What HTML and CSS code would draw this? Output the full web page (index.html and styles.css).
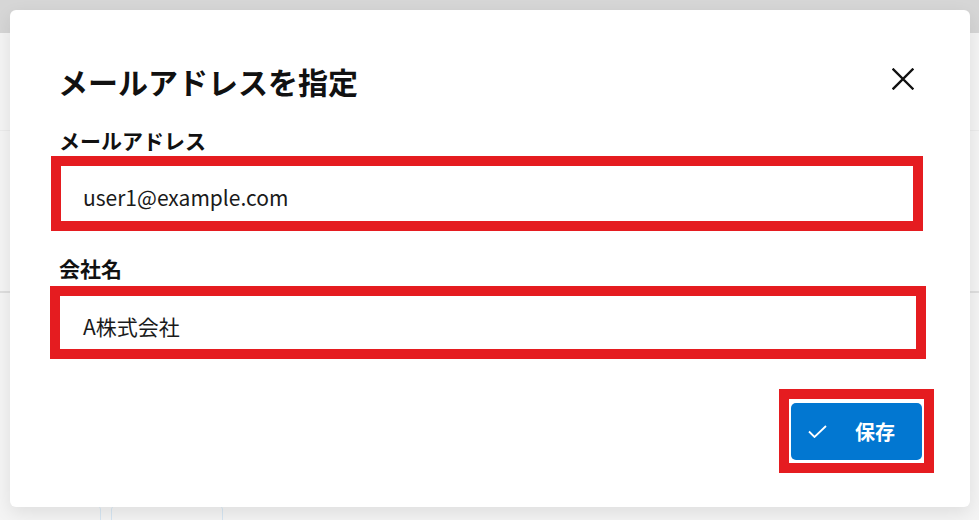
FILE: index.html
```html
<!DOCTYPE html>
<html lang="ja">
<head>
<meta charset="utf-8">
<title>メールアドレスを指定</title>
<link rel="stylesheet" href="styles.css">
</head>
<body>
<div class="page">
  <div class="topbar"></div>
  <div class="bg-content">
    <div class="bg-line bg-line-1"></div>
    <div class="bg-line bg-line-2"></div>
    <div class="bg-cards">
      <div class="bg-card bg-card-a"></div>
      <div class="bg-card bg-card-b"></div>
    </div>
  </div>
</div>

<div class="modal" role="dialog" aria-labelledby="dlg-title">
  <div class="modal-header">
    <h1 id="dlg-title" class="modal-title">メールアドレスを指定</h1>
    <button class="close-btn" aria-label="閉じる">
      <svg width="22" height="22" viewBox="0 0 22 22" aria-hidden="true">
        <path d="M1.5 1.5 L20.5 20.5 M20.5 1.5 L1.5 20.5" stroke="#111" stroke-width="2.4" fill="none" stroke-linecap="square"/>
      </svg>
    </button>
  </div>

  <label class="field-label label-email">メールアドレス</label>
  <div class="field field-email">user1@example.com</div>

  <label class="field-label label-company">会社名</label>
  <div class="field field-company">A株式会社</div>

  <div class="modal-footer">
    <div class="btn-frame">
      <button class="btn-save">
        <svg class="check" width="19" height="13" viewBox="0 0 19 13" aria-hidden="true">
          <path d="M1 6.5 L6.5 12 L18 1" stroke="#fff" stroke-width="1.8" fill="none"/>
        </svg>
        <span class="btn-text">保存</span>
      </button>
    </div>
  </div>
</div>
</body>
</html>
```

FILE: styles.css
```css
* { box-sizing: border-box; }

html, body {
  margin: 0;
  padding: 0;
}

body {
  width: 979px;
  height: 520px;
  overflow: hidden;
  background: #f4f4f4;
  font-family: "Noto Sans CJK JP", "Noto Sans", sans-serif;
  color: #111;
}

.page {
  width: 979px;
  height: 520px;
  overflow: hidden;
}

.topbar {
  height: 33px;
  background: #d6d6d6;
}

.bg-content {
  height: 487px;
  overflow: hidden;
}

.bg-line {
  height: 1px;
  background: #ebebeb;
}

.bg-line-1 {
  margin-top: 97px;
}

.bg-line-2 {
  margin-top: 160px;
  height: 2px;
  background: #dedede;
}

.bg-cards {
  display: flex;
  gap: 10px;
  padding-left: 93px;
  margin-top: 212px;
}

.bg-card {
  height: 15px;
  border: 1px solid #d6e6f3;
  border-bottom: 0;
  border-radius: 5px 5px 0 0;
}

.bg-card-a { width: 8px; border-left: 0; border-top: 0; border-radius: 0 5px 0 0; }
.bg-card-b { width: 112px; }

/* Modal overlays the page */
.modal {
  position: absolute;
  top: 10px;
  left: 10px;
  width: 960px;
  height: 497px;
  background: #fff;
  border-radius: 6px;
  box-shadow: 0 6px 18px rgba(0, 0, 0, 0.09);
  padding-top: 49px;
}

.modal-header {
  display: flex;
  align-items: center;
  justify-content: space-between;
  padding: 0 56px 0 48px;
}

.modal-title {
  margin: 0;
  font-size: 30px;
  line-height: 45px;
  font-weight: 700;
  color: #111;
}

.close-btn {
  display: flex;
  padding: 0;
  border: 0;
  background: none;
  margin-bottom: 5px;
}

.field-label {
  display: block;
  margin-left: 49px;
  font-size: 21px;
  line-height: 30px;
  font-weight: 700;
  color: #111;
}

.label-email {
  margin-top: 21px;
}

.label-company {
  margin-top: 22px;
}

.field {
  display: flex;
  align-items: center;
  border: 10px solid #e51c20;
  background: #fff;
  font-size: 21px;
  color: #1a1a1a;
  padding: 6px 0 0 22px;
}

.field-email {
  margin: 1px 47px 0 41px;
  height: 75px;
}

.field-company {
  margin: 3px 44px 0 40px;
  height: 73px;
  padding-left: 23px;
}

.modal-footer {
  display: flex;
  justify-content: flex-end;
  margin-top: 30px;
  padding-right: 36px;
}

.btn-frame {
  border: 10px solid #e51c20;
  padding: 4px 2px 3px 2px;
  background: #fff;
}

.btn-save {
  display: flex;
  align-items: center;
  width: 131px;
  height: 57px;
  padding: 0 0 0 17px;
  border: 0;
  border-radius: 5px;
  background: #0277d1;
  color: #fff;
  font-family: "Noto Sans CJK JP", "Noto Sans", sans-serif;
}

.check {
  flex: none;
}

.btn-text {
  margin-left: 28px;
  font-size: 20px;
  font-weight: 700;
  line-height: 1;
}
```
